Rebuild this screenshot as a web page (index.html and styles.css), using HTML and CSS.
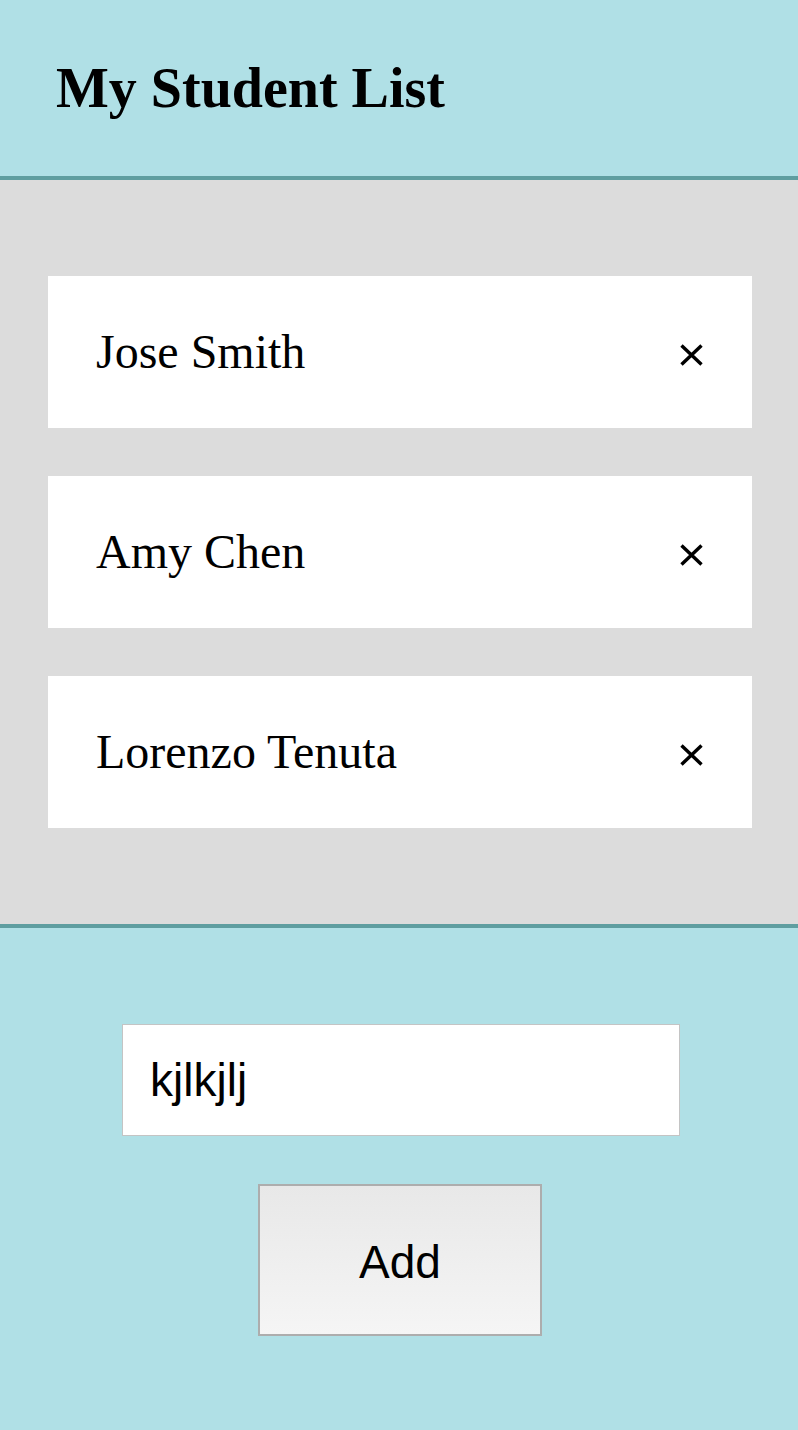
FILE: index.html
```html
<!DOCTYPE html>
<html lang="en">
<head>
<meta charset="utf-8">
<title>My Student List</title>
<link rel="stylesheet" href="styles.css">
</head>
<body>
<header class="top">
  <h1 class="title">My Student List</h1>
</header>
<main class="list">
  <div class="card">
    <span class="name">Jose Smith</span>
    <span class="remove"><svg width="23" height="22" viewBox="0 0 23 22"><path d="M1.5 1.5 L21.5 20.5 M21.5 1.5 L1.5 20.5" stroke="#000" stroke-width="3.4" fill="none"/></svg></span>
  </div>
  <div class="card">
    <span class="name">Amy Chen</span>
    <span class="remove"><svg width="23" height="22" viewBox="0 0 23 22"><path d="M1.5 1.5 L21.5 20.5 M21.5 1.5 L1.5 20.5" stroke="#000" stroke-width="3.4" fill="none"/></svg></span>
  </div>
  <div class="card">
    <span class="name">Lorenzo Tenuta</span>
    <span class="remove"><svg width="23" height="22" viewBox="0 0 23 22"><path d="M1.5 1.5 L21.5 20.5 M21.5 1.5 L1.5 20.5" stroke="#000" stroke-width="3.4" fill="none"/></svg></span>
  </div>
</main>
<footer class="add-area">
  <input class="field" type="text" value="kjlkjlj">
  <button class="add-btn" type="button">Add</button>
</footer>
</body>
</html>
```
FILE: styles.css
```css
html, body {
  margin: 0;
  padding: 0;
}
body {
  background: #b0e0e6;
  font-family: "Liberation Serif", "Times New Roman", serif;
  color: #000;
}
.top {
  background: #b0e0e6;
  padding: 56px 56px;
  border-bottom: 4px solid #5f9ea0;
}
.title {
  margin: 0;
  font-size: 56px;
  line-height: 64px;
  font-weight: bold;
}
.list {
  background: #dcdcdc;
  padding: 96px 46px 96px 48px;
  display: flex;
  flex-direction: column;
  gap: 48px;
  border-bottom: 4px solid #5f9ea0;
}
.card {
  background: #fff;
  height: 152px;
  box-sizing: border-box;
  padding: 0 49px 0 48px;
  display: flex;
  align-items: center;
  justify-content: space-between;
}
.name {
  font-size: 48px;
  line-height: 56px;
}
.remove {
  display: flex;
  margin-top: 6px;
}
.add-area {
  padding: 96px 0 96px;
  display: flex;
  flex-direction: column;
  align-items: center;
  gap: 48px;
}
.field {
  width: 558px;
  height: 112px;
  box-sizing: border-box;
  margin: 0 0 0 4px;
  border: 1px solid #c4c4c4;
  padding: 0 27px;
  font-family: "Liberation Sans", Arial, sans-serif;
  font-size: 46px;
  color: #000;
  background: #fff;
  outline: none;
}
.add-btn {
  width: 284px;
  height: 152px;
  box-sizing: border-box;
  margin-left: 2px;
  border: 2px solid #adadad;
  background: linear-gradient(#e8e8e8, #f5f5f5);
  font-family: "Liberation Sans", Arial, sans-serif;
  font-size: 46px;
  color: #000;
  padding: 4px 0 0;
}
```
